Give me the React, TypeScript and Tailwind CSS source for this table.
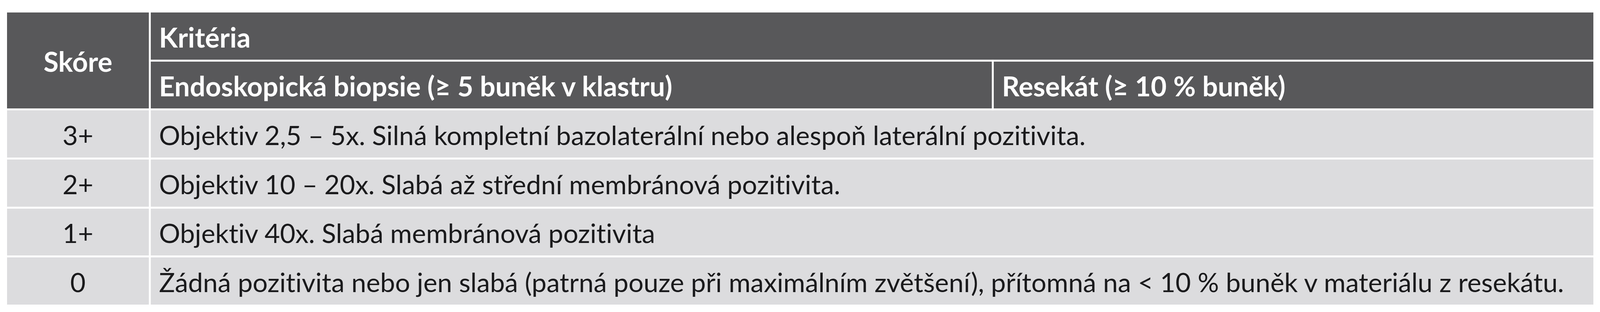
// @ts-nocheck
/* eslint-disable */

const ROWS = [
  {
    score: "3+",
    text: "Objektiv 2,5 – 5x. Silná kompletní bazolaterální nebo alespoň laterální pozitivita.",
    h: "h-[121px]",
  },
  {
    score: "2+",
    text: "Objektiv 10 – 20x. Slabá až střední membránová pozitivita.",
    h: "h-[121px]",
  },
  {
    score: "1+",
    text: "Objektiv 40x. Slabá membránová pozitivita",
    h: "h-[120px]",
  },
  {
    score: "0",
    text: "Žádná pozitivita nebo jen slabá (patrná pouze při maximálním zvětšení), přítomná na < 10 % buněk v materiálu z resekátu.",
    h: "h-[121px]",
  },
];

export default function App() {
  return (
    <div className="w-[4121px] h-[800px] bg-white pl-[18px] pt-[32px] font-['Lato',_'Liberation_Sans',_sans-serif] text-[68px] leading-none [font-variant-ligatures:none]">
      <div className="w-[4061px] grid grid-cols-[363px_1fr] gap-[5px]">
        {/* header */}
        <div className="row-span-2 bg-[#58585a] text-white text-[70px] font-bold flex items-center justify-center pt-[4px]">
          Skóre
        </div>
        <div className="h-[121px] bg-[#58585a] text-white text-[70px] font-bold flex items-center pl-[21px] pt-[4px]">
          Kritéria
        </div>
        <div className="h-[120px] flex gap-[5px]">
          <div className="w-[2153px] bg-[#58585a] text-white text-[70px] font-bold flex items-center pl-[21px] pt-[4px]">
            Endoskopická biopsie (≥ 5 buněk v klastru)
          </div>
          <div className="flex-1 bg-[#58585a] text-white text-[70px] font-bold flex items-center pl-[21px] pt-[4px]">
            Resekát (≥ 10 % buněk)
          </div>
        </div>

        {/* body */}
        {ROWS.map((r) => (
          <>
            <div
              key={r.score + "s"}
              className={`${r.h} bg-[#dcdcde] text-[#1a1a1c] flex items-center justify-center pt-[4px]`}
            >
              {r.score}
            </div>
            <div
              key={r.score + "t"}
              className={`${r.h} bg-[#dcdcde] text-[#1a1a1c] flex items-center pl-[21px] pt-[4px] whitespace-nowrap`}
            >
              {r.text}
            </div>
          </>
        ))}
      </div>
    </div>
  );
}
